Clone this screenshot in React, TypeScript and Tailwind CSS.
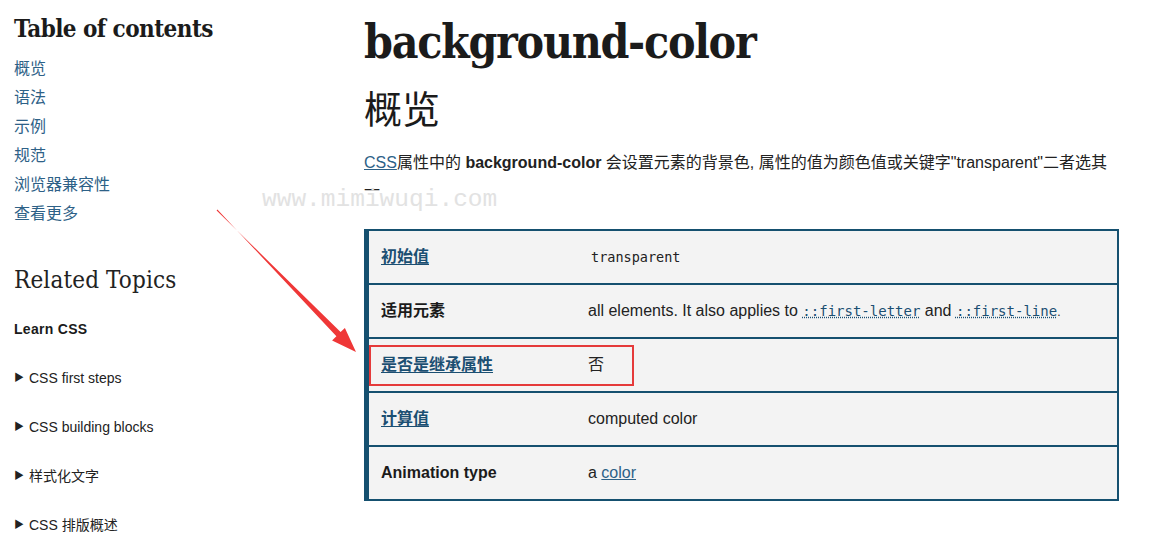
import React from "react";

const sans = "font-['Liberation_Sans','Noto_Sans_CJK_SC',sans-serif]";
const slab = "font-['DejaVu_Serif','Noto_Sans_CJK_SC',serif]";
const mono = "font-['DejaVu_Sans_Mono',monospace]";

const toc = ["概览", "语法", "示例", "规范", "浏览器兼容性", "查看更多"];
const topics = ["CSS first steps", "CSS building blocks", "样式化文字", "CSS 排版概述"];

function Row({
  head,
  link,
  children,
  last,
}: {
  head: string;
  link?: boolean;
  children: React.ReactNode;
  last?: boolean;
}) {
  return (
    <div
      className={`flex h-[54px] items-center border-t-2 border-[#15506f] ${
        last ? "border-b-2 h-[56px]" : ""
      }`}
    >
      <div className="w-[219px] pl-[12px] font-bold text-[16px] text-[#1b1b1b]">
        {link ? (
          <span className="text-[#1b4f72] underline underline-offset-2">{head}</span>
        ) : (
          head
        )}
      </div>
      <div className="flex-1 text-[16px] text-[#222]">{children}</div>
    </div>
  );
}

function Arrow() {
  return (
    <svg
      className="pointer-events-none absolute left-0 top-0"
      width="1157"
      height="544"
      viewBox="0 0 1157 544"
    >
      <polygon
        points="217.4,209.6 336.4,336.3 332.1,340.5 356,352 344.9,327.9 340.6,332.1 216.6,210.4"
        fill="#ef3737"
      />
    </svg>
  );
}

export default function App() {
  return (
    <div className={`relative h-[544px] w-[1157px] overflow-hidden bg-white ${sans}`}>
      <div className="flex">
        {/* sidebar */}
        <aside className="w-[364px] shrink-0 pl-[14px] pt-[14px]">
          <h2 className={`${slab} text-[24px] font-bold leading-[29px] tracking-[-0.55px] text-[#1b1b1b] font-stretch-condensed`}>
            Table of contents
          </h2>
          <ul className="mt-[11px]">
            {toc.map((t) => (
              <li key={t} className="text-[16px] leading-[29px] text-[#2d6187]">
                {t}
              </li>
            ))}
          </ul>
          <h2 className={`${slab} mt-[38px] text-[24px] font-normal leading-[29px] tracking-[0.15px] text-[#222] font-stretch-condensed`}>
            Related Topics
          </h2>
          <div className="mt-[24px] text-[14px] font-bold leading-[20px] tracking-[0.3px] text-[#1b1b1b]">
            Learn CSS
          </div>
          <ul className="mt-[29px] flex flex-col gap-[29px]">
            {topics.map((t) => (
              <li key={t} className="flex items-center text-[14px] leading-[20px] text-[#222]">
                <span className="mr-[5px] text-[10px]">▶</span>
                {t}
              </li>
            ))}
          </ul>
        </aside>

        {/* article */}
        <main className="w-[755px] shrink-0 pt-[14px]">
          <h1 className={`${slab} text-[46px] font-bold leading-[56px] tracking-[-1.3px] text-[#1b1b1b] font-stretch-condensed`}>
            background-color
          </h1>
          <h2 className="mt-[18px] font-['Liberation_Serif','Noto_Sans_CJK_SC',serif] text-[38px] leading-[44px] text-[#1b1b1b]">
            概览
          </h2>
          <p className="mt-[17px] text-[16px] leading-[28px] text-[#222]">
            <span className="text-[#2d6187] underline">CSS</span>属性中的{" "}
            <strong className="font-bold">background-color</strong> 会设置元素的背景色, 属性的值为颜色值或关键字"transparent"二者选其
            <br />一
          </p>

          <div className="mt-[24px] border-l-[5px] border-r-2 border-[#15506f] bg-[#f3f3f3]">
            <Row head="初始值" link>
              <span className={`${mono} ml-[3px] text-[13.5px]`}>transparent</span>
            </Row>
            <Row head="适用元素">
              all elements. It also applies to{" "}
              <span className={`${mono} text-[14px] text-[#1b4f72] underline decoration-dotted`}>
                ::first-letter
              </span>{" "}
              and{" "}
              <span className={`${mono} text-[14px] text-[#1b4f72] underline decoration-dotted`}>
                ::first-line
              </span>
              <span className="text-[12px]">.</span>
            </Row>
            <Row head="是否是继承属性" link>
              否
            </Row>
            <Row head="计算值" link>
              computed color
            </Row>
            <Row head="Animation type" last>
              a <span className="text-[#2d6187] underline">color</span>
            </Row>
          </div>
        </main>
      </div>

      {/* watermark */}
      <div className="pointer-events-none absolute left-[262px] top-[186px] font-['Liberation_Mono',monospace] text-[24.5px] leading-[28px] text-[#e2e2e2]">
        www.mimiwuqi.com
      </div>

      {/* annotation box */}
      <div className="pointer-events-none absolute left-[369px] top-[345px] h-[41px] w-[265px] border-2 border-[#e53a3a]" />
      <Arrow />
    </div>
  );
}
